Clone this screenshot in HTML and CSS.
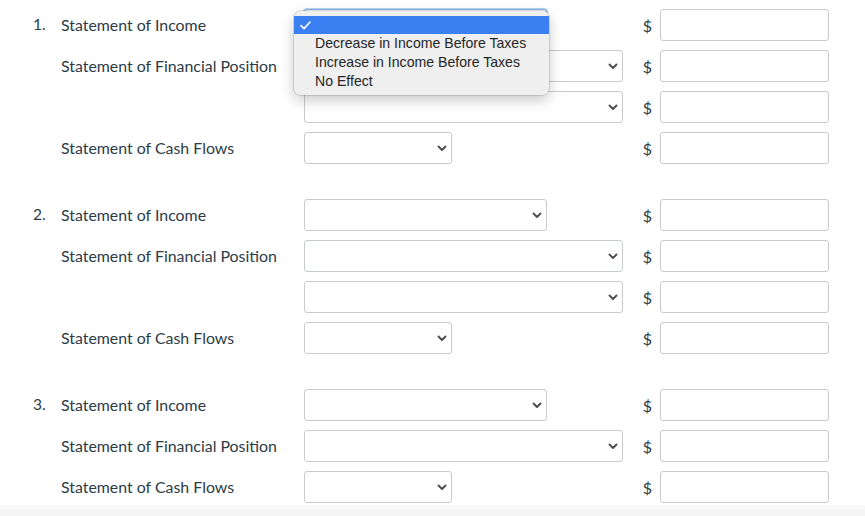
FILE: index.html
```html
<!DOCTYPE html>
<html>
<head>
<meta charset="utf-8">
<link rel="stylesheet" href="styles.css">
</head>
<body>
<div class="page">
  <div class="section">
    <div class="row">
      <span class="num">1.</span><span class="label">Statement of Income</span>
      <div class="cell">
        <div class="select w-income focused"><svg class="chev" width="10" height="7" viewBox="0 0 10 7"><path d="M1.5 1.5 L5 5 L8.5 1.5" /></svg></div>
        <div class="popup">
          <div class="opt selected"><svg class="check" width="11" height="9" viewBox="0 0 11 9"><path d="M1 4.6 L4 7.6 L10 1" /></svg></div>
          <div class="opt">Decrease in Income Before Taxes</div>
          <div class="opt">Increase in Income Before Taxes</div>
          <div class="opt">No Effect</div>
        </div>
      </div>
      <span class="dollar">$</span><input class="amount" type="text">
    </div>
    <div class="row">
      <span class="num"></span><span class="label">Statement of Financial Position</span>
      <div class="cell"><div class="select w-fin"><svg class="chev" width="10" height="7" viewBox="0 0 10 7"><path d="M1.5 1.5 L5 5 L8.5 1.5" /></svg></div></div>
      <span class="dollar">$</span><input class="amount" type="text">
    </div>
    <div class="row">
      <span class="num"></span><span class="label"></span>
      <div class="cell"><div class="select w-fin"><svg class="chev" width="10" height="7" viewBox="0 0 10 7"><path d="M1.5 1.5 L5 5 L8.5 1.5" /></svg></div></div>
      <span class="dollar">$</span><input class="amount" type="text">
    </div>
    <div class="row">
      <span class="num"></span><span class="label">Statement of Cash Flows</span>
      <div class="cell"><div class="select w-cash"><svg class="chev" width="10" height="7" viewBox="0 0 10 7"><path d="M1.5 1.5 L5 5 L8.5 1.5" /></svg></div></div>
      <span class="dollar">$</span><input class="amount" type="text">
    </div>
  </div>

  <div class="section">
    <div class="row">
      <span class="num">2.</span><span class="label">Statement of Income</span>
      <div class="cell"><div class="select w-income"><svg class="chev" width="10" height="7" viewBox="0 0 10 7"><path d="M1.5 1.5 L5 5 L8.5 1.5" /></svg></div></div>
      <span class="dollar">$</span><input class="amount" type="text">
    </div>
    <div class="row">
      <span class="num"></span><span class="label">Statement of Financial Position</span>
      <div class="cell"><div class="select w-fin"><svg class="chev" width="10" height="7" viewBox="0 0 10 7"><path d="M1.5 1.5 L5 5 L8.5 1.5" /></svg></div></div>
      <span class="dollar">$</span><input class="amount" type="text">
    </div>
    <div class="row">
      <span class="num"></span><span class="label"></span>
      <div class="cell"><div class="select w-fin"><svg class="chev" width="10" height="7" viewBox="0 0 10 7"><path d="M1.5 1.5 L5 5 L8.5 1.5" /></svg></div></div>
      <span class="dollar">$</span><input class="amount" type="text">
    </div>
    <div class="row">
      <span class="num"></span><span class="label">Statement of Cash Flows</span>
      <div class="cell"><div class="select w-cash"><svg class="chev" width="10" height="7" viewBox="0 0 10 7"><path d="M1.5 1.5 L5 5 L8.5 1.5" /></svg></div></div>
      <span class="dollar">$</span><input class="amount" type="text">
    </div>
  </div>

  <div class="section">
    <div class="row">
      <span class="num">3.</span><span class="label">Statement of Income</span>
      <div class="cell"><div class="select w-income"><svg class="chev" width="10" height="7" viewBox="0 0 10 7"><path d="M1.5 1.5 L5 5 L8.5 1.5" /></svg></div></div>
      <span class="dollar">$</span><input class="amount" type="text">
    </div>
    <div class="row">
      <span class="num"></span><span class="label">Statement of Financial Position</span>
      <div class="cell"><div class="select w-fin"><svg class="chev" width="10" height="7" viewBox="0 0 10 7"><path d="M1.5 1.5 L5 5 L8.5 1.5" /></svg></div></div>
      <span class="dollar">$</span><input class="amount" type="text">
    </div>
    <div class="row">
      <span class="num"></span><span class="label">Statement of Cash Flows</span>
      <div class="cell"><div class="select w-cash"><svg class="chev" width="10" height="7" viewBox="0 0 10 7"><path d="M1.5 1.5 L5 5 L8.5 1.5" /></svg></div></div>
      <span class="dollar">$</span><input class="amount" type="text">
    </div>
  </div>
  <div class="footer-strip"></div>
</div>
</body>
</html>
```
FILE: styles.css
```css
html, body {
  margin: 0;
  padding: 0;
  background: #ffffff;
}
body {
  font-family: Lato, "Liberation Sans", sans-serif;
  color: #2d3b45;
  overflow: hidden;
}
.page {
  padding-top: 9px;
  width: 865px;
  height: 516px;
  box-sizing: border-box;
  display: flex;
  flex-direction: column;
}
.section {
  display: flex;
  flex-direction: column;
  gap: 9px;
  margin-bottom: 35px;
}
.section:nth-child(3) {
  margin-bottom: 0;
}
.row {
  display: flex;
  align-items: center;
  height: 32px;
  padding-left: 33px;
}
.num {
  width: 28px;
  font-size: 15.5px;
  flex: none;
  margin-top: -2px;
}
.label {
  width: 243px;
  font-size: 15.9px;
  flex: none;
  white-space: nowrap;
  margin-top: -2px;
}
.cell {
  position: relative;
  width: 319px;
  flex: none;
  height: 32px;
}
.select {
  box-sizing: border-box;
  height: 32px;
  border: 1px solid #c7cbcf;
  border-radius: 3px;
  background: #fff;
  display: flex;
  align-items: center;
  justify-content: flex-end;
  padding-right: 4px;
}
.select.focused {
  border-color: #8ab4e8;
  box-shadow: 0 0 0 1px #b7d1f2;
}
.w-income { width: 243px; }
.w-fin { width: 319px; }
.w-cash { width: 148px; }
.chev path {
  fill: none;
  stroke: #4d4d4d;
  stroke-width: 1.9;
  stroke-linecap: round;
  stroke-linejoin: round;
}
.dollar {
  width: 37px;
  flex: none;
  text-align: right;
  padding-right: 8px;
  box-sizing: border-box;
  font-size: 16px;
  font-family: Lato, "Liberation Sans", sans-serif;
}
.amount {
  box-sizing: border-box;
  width: 169px;
  height: 32px;
  border: 1px solid #c7cbcf;
  border-radius: 3px;
  margin: 0;
  padding: 0 6px;
  background: #fff;
  outline: none;
}
.popup {
  position: absolute;
  left: -10px;
  top: 2px;
  width: 255px;
  box-sizing: border-box;
  padding: 4px 0;
  background: #efefef;
  border-radius: 6px;
  box-shadow: 0 0 0 0.5px rgba(0, 0, 0, 0.22), 0 5px 14px rgba(0, 0, 0, 0.22);
  font-family: "Liberation Sans", Arial, sans-serif;
  font-size: 14.1px;
  color: #262626;
  z-index: 10;
}
.opt {
  height: 19px;
  line-height: 19px;
  padding-left: 21px;
  white-space: nowrap;
}
.opt.selected {
  background: #3b80f2;
  height: 18px;
  margin-top: 1px;
  margin-bottom: 0;
  display: flex;
  align-items: center;
  padding-left: 6px;
}
.check path {
  fill: none;
  stroke: #ffffff;
  stroke-width: 1.6;
  stroke-linecap: round;
  stroke-linejoin: round;
}
.footer-strip {
  flex: 1;
  margin-top: 2px;
  background: linear-gradient(#f9f9f9, #f4f4f4);
}
```
